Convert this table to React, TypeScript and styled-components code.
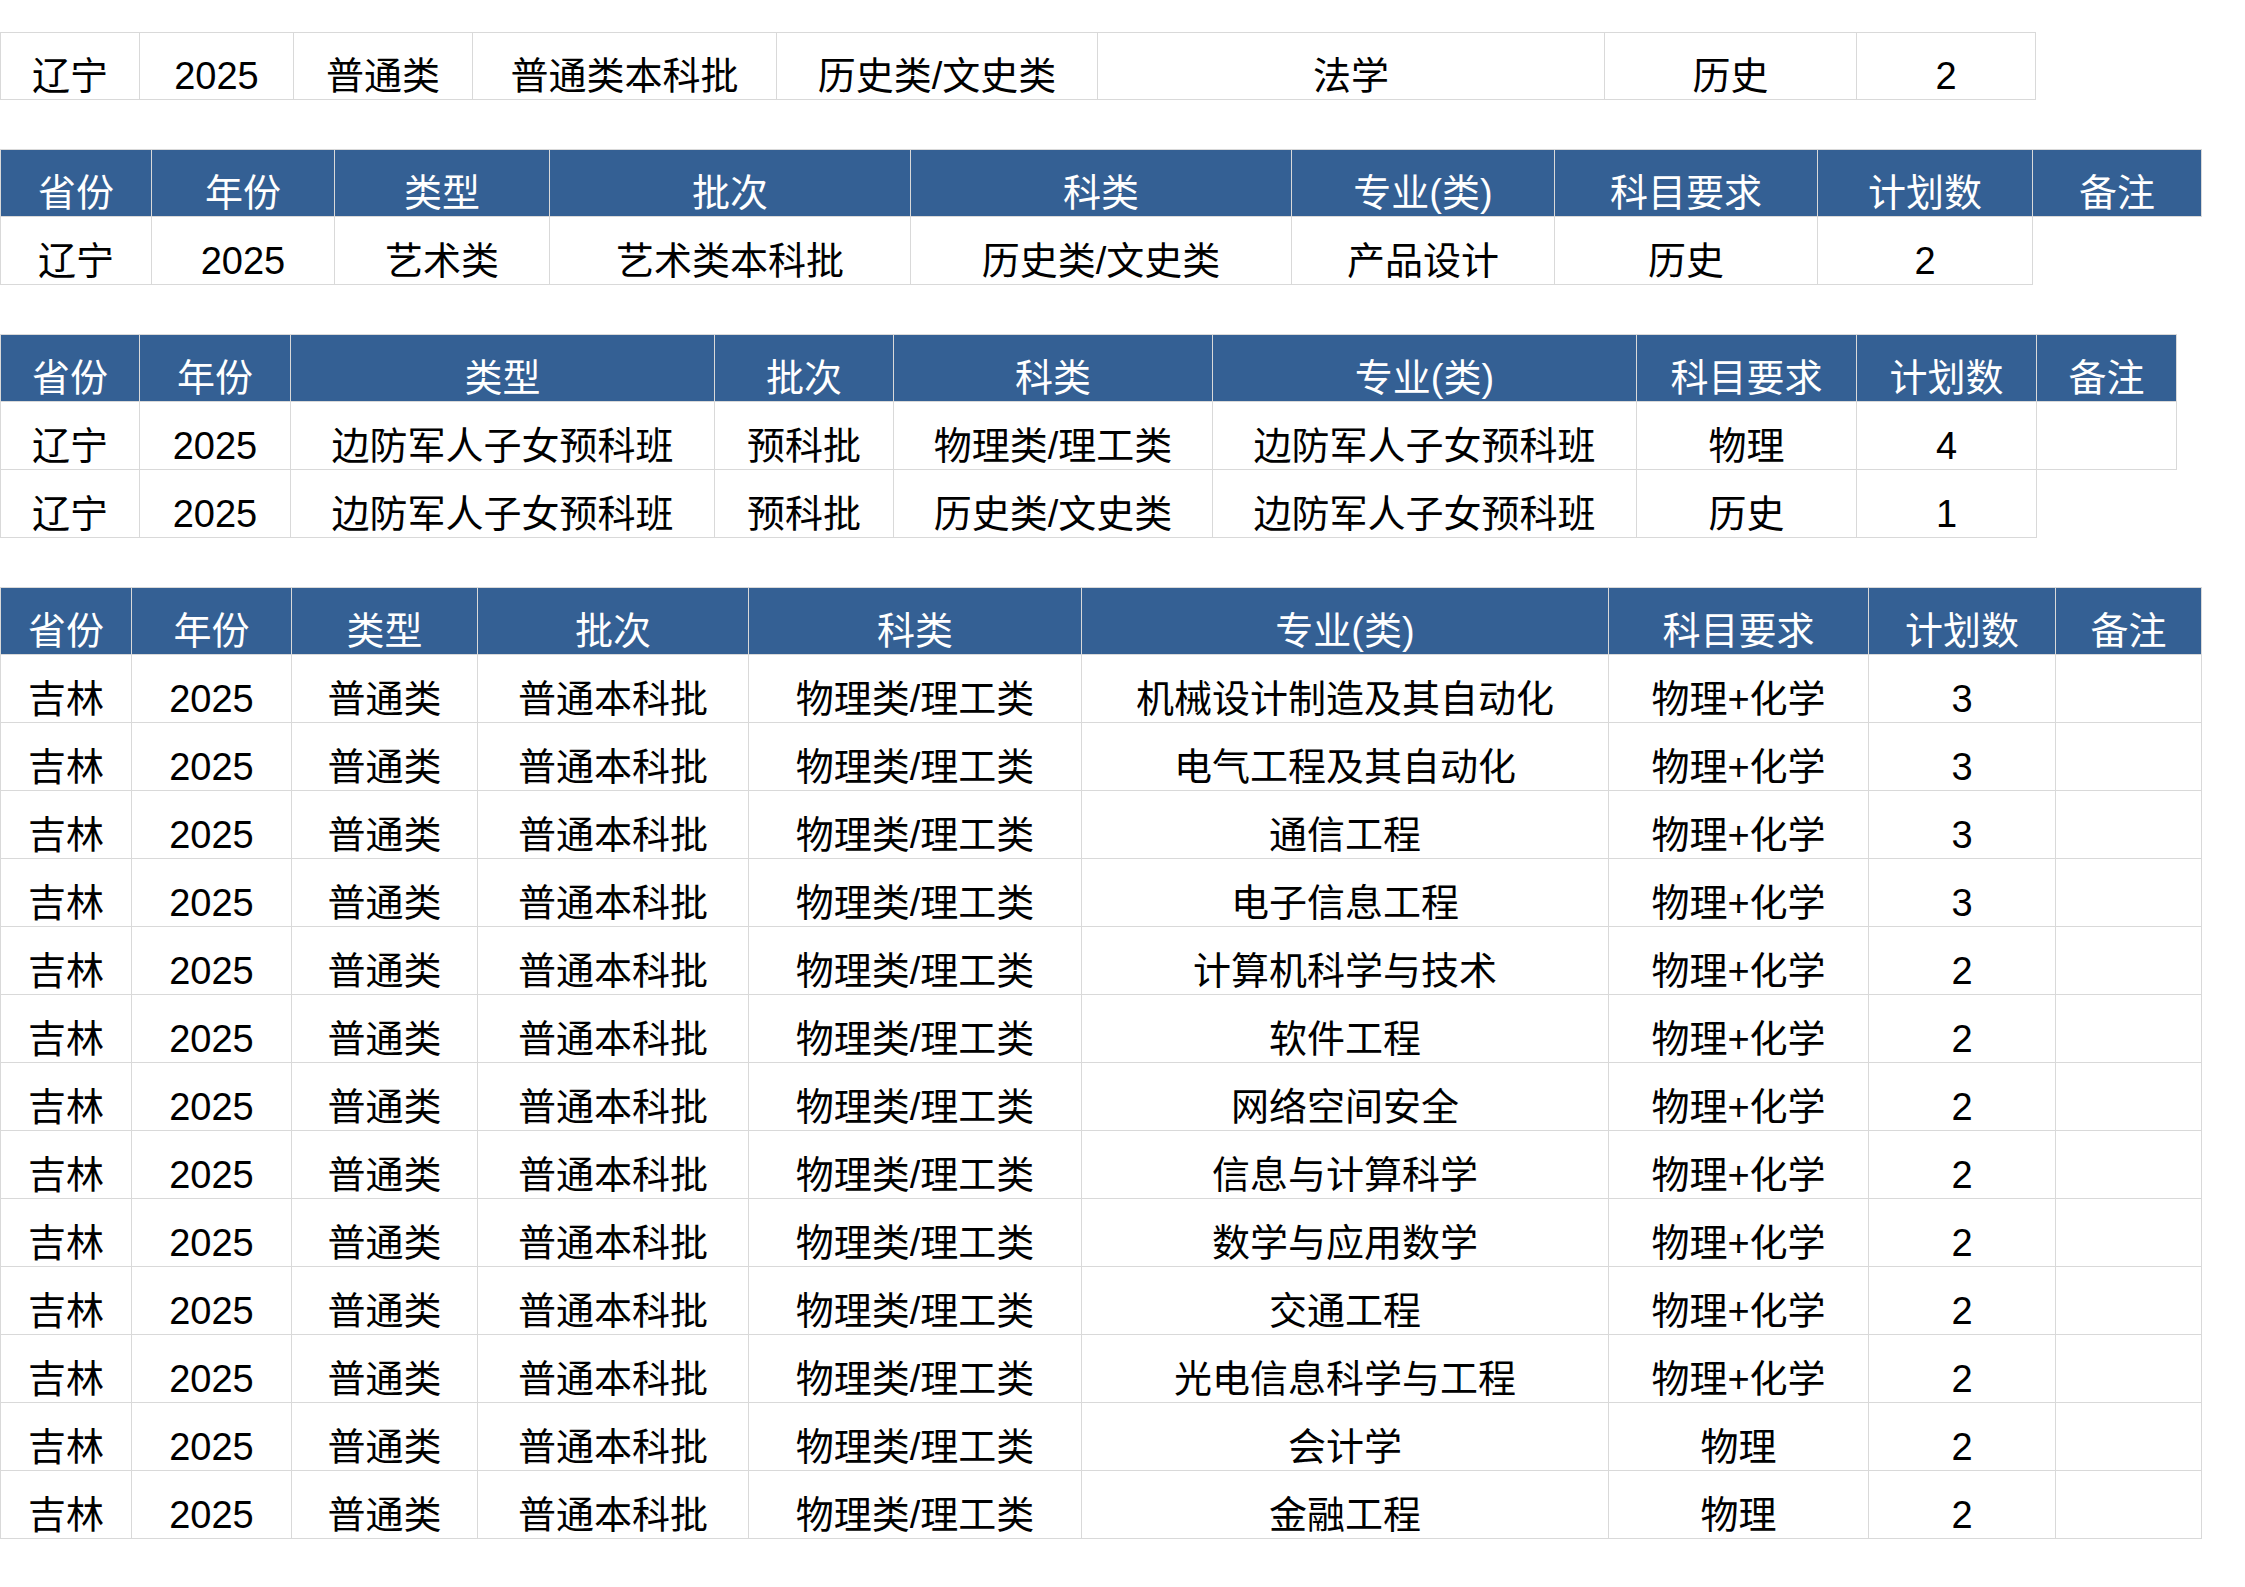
import React from "react";
import styled, { createGlobalStyle } from "styled-components";

const GlobalStyle = createGlobalStyle`
  html, body {
    margin: 0;
    padding: 0;
    background: #fff;
  }
  body {
    font-family: "Liberation Sans Narrow", "Liberation Sans", "Noto Sans CJK SC", sans-serif;
  }
`;

const Page = styled.div`
  display: flex;
  flex-direction: column;
  align-items: flex-start;
  gap: 49px;
  padding-top: 32px;
  width: 2245px;
  min-height: 1587px;
  box-sizing: border-box;
`;

const Cell = styled.div<{ $head?: boolean }>`
  display: flex;
  justify-content: center;
  align-items: flex-end;
  box-sizing: border-box;
  padding-bottom: 4px;
  border-right: 1px solid #d9d9d9;
  border-bottom: 1px solid #d9d9d9;
  background: ${(p) => (p.$head ? "#346094" : "#fff")};
  color: ${(p) => (p.$head ? "#fff" : "#000")};
  font-size: 38px;
  line-height: 38px;
  white-space: nowrap;
  overflow: hidden;

  &:first-child {
    border-left: 1px solid #d9d9d9;
  }
`;

const Row = styled.div<{ $cols: string }>`
  display: grid;
  grid-template-columns: ${(p) => p.$cols};
  height: 68px;
`;

const Table = styled.div`
  display: flex;
  flex-direction: column;

  & > ${Row}:first-child > ${Cell} {
    border-top: 1px solid #d9d9d9;
  }
`;

const HEAD = ["省份", "年份", "类型", "批次", "科类", "专业(类)", "科目要求", "计划数", "备注"];

const toCols = (w: number[]) => w.map((n) => `${n}px`).join(" ");

type SheetProps = {
  widths: number[];
  header?: boolean;
  rows: string[][];
};

function Sheet({ widths, header, rows }: SheetProps) {
  const cols = toCols(widths);
  return (
    <Table>
      {header && (
        <Row $cols={cols}>
          {HEAD.map((h) => (
            <Cell key={h} $head>
              {h}
            </Cell>
          ))}
        </Row>
      )}
      {rows.map((r, i) => (
        <Row key={i} $cols={cols}>
          {r.map((c, j) => (
            <Cell key={j}>{c}</Cell>
          ))}
        </Row>
      ))}
    </Table>
  );
}

// widths measured off the sheet, one list per block
const W1 = [140, 154, 179, 304, 321, 507, 252, 179];
const W2 = [152, 183, 215, 361, 381, 263, 263, 215, 169];
const W3 = [140, 151, 424, 179, 319, 424, 220, 180, 140];
const W4 = [132, 160, 186, 271, 333, 527, 260, 187, 146];

const rows1 = [["辽宁", "2025", "普通类", "普通类本科批", "历史类/文史类", "法学", "历史", "2"]];

const rows2 = [["辽宁", "2025", "艺术类", "艺术类本科批", "历史类/文史类", "产品设计", "历史", "2"]];

const rows3 = [
  ["辽宁", "2025", "边防军人子女预科班", "预科批", "物理类/理工类", "边防军人子女预科班", "物理", "4", ""],
  ["辽宁", "2025", "边防军人子女预科班", "预科批", "历史类/文史类", "边防军人子女预科班", "历史", "1"],
];

const jilin: [string, string, string][] = [
  ["机械设计制造及其自动化", "物理+化学", "3"],
  ["电气工程及其自动化", "物理+化学", "3"],
  ["通信工程", "物理+化学", "3"],
  ["电子信息工程", "物理+化学", "3"],
  ["计算机科学与技术", "物理+化学", "2"],
  ["软件工程", "物理+化学", "2"],
  ["网络空间安全", "物理+化学", "2"],
  ["信息与计算科学", "物理+化学", "2"],
  ["数学与应用数学", "物理+化学", "2"],
  ["交通工程", "物理+化学", "2"],
  ["光电信息科学与工程", "物理+化学", "2"],
  ["会计学", "物理", "2"],
  ["金融工程", "物理", "2"],
];

const rows4 = jilin.map(([major, req, n]) => [
  "吉林",
  "2025",
  "普通类",
  "普通本科批",
  "物理类/理工类",
  major,
  req,
  n,
  "",
]);

export default function App() {
  return (
    <>
      <GlobalStyle />
      <Page>
        <Sheet widths={W1} rows={rows1} />
        <Sheet widths={W2} header rows={rows2} />
        <Sheet widths={W3} header rows={rows3} />
        <Sheet widths={W4} header rows={rows4} />
      </Page>
    </>
  );
}
